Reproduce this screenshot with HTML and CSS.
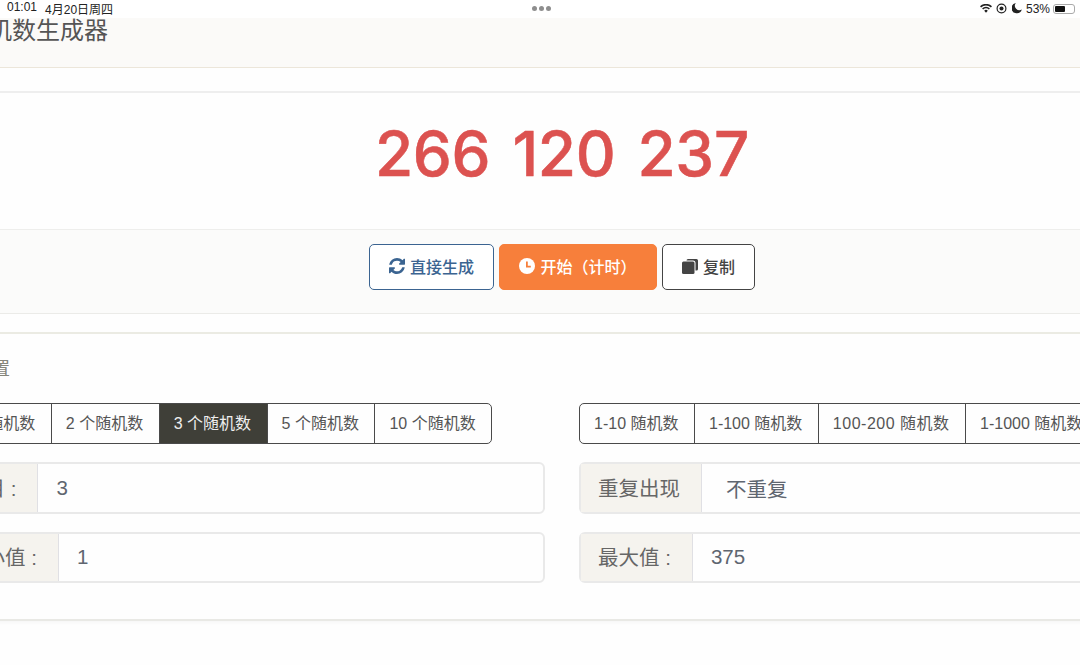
FILE: index.html
```html
<!DOCTYPE html>
<html>
<head>
    <title>随机数生成器</title>
    <link rel="stylesheet" href="styles.css">
</head>
<body>
    <div class="statusbar">
        <div class="status-left"><span>01:01</span><span>4月20日周四</span></div>
        <div class="status-dots"><i></i><i></i><i></i></div>
        <div class="status-right">
            <svg class="st-wifi" viewBox="0 0 14 10"><path d="M7 10 4.900 7.600a3 3 0 0 1 4.200 0zM3.700 6.300 2.400 4.900a6.600 6.600 0 0 1 9.200 0l-1.300 1.400a4.700 4.700 0 0 0-6.600 0zM1.300 3.700 0 2.400a10 10 0 0 1 14 0l-1.300 1.300a8.200 8.200 0 0 0-11.400 0z"/></svg>
            <svg class="st-lock" viewBox="0 0 12 12"><circle cx="6" cy="6" r="4.800" fill="none" stroke="#222" stroke-width="1.300"/><circle cx="6" cy="6" r="2.200"/></svg>
            <svg class="st-moon" viewBox="0 0 10 11"><path d="M3.800 0a4.500 4.500 0 0 0 6 6.500A5.200 5.200 0 1 1 3.800 0z"/></svg>
            <span>53%</span>
            <div class="battery"><div class="battery-level"></div></div>
        </div>
    </div>

    <div class="page">
        <div class="page-header">随机数生成器</div>

        <div class="card result-card">
            <div class="result">
                <span>266</span><span>120</span><span>237</span>
            </div>
            <div class="actions">
                <button class="btn btn-blue">
                    <svg class="icon" viewBox="0 0 1536 1536"><path d="M1511 928q0 5-1 7-64 268-268 434.500t-478 166.500q-146 0-282.500-55t-243.500-157l-129 129q-19 19-45 19t-45-19-19-45v-448q0-26 19-45t45-19h448q26 0 45 19t19 45-19 45l-137 137q71 66 161 102t187 36q134 0 250-65t186-179q11-17 53-117 8-23 30-23h192q13 0 22.500 9.500t9.500 22.500zm25-800v448q0 26-19 45t-45 19h-448q-26 0-45-19t-19-45 19-45l138-138q-148-137-349-137-134 0-250 65t-186 179q-11 17-53 117-8 23-30 23h-199q-13 0-22.500-9.500t-9.500-22.500v-7q65-268 270-434.500t480-166.500q146 0 284 55.500t245 156.500l130-129q19-19 45-19t45 19 19 45z"/></svg>
                    直接生成
                </button>
                <button class="btn btn-orange">
                    <svg class="icon" viewBox="0 0 16 16"><circle cx="8" cy="8" r="8"/><path d="M7 3.500h1.800v4.200h3v1.800H7z" fill="#f77f3b"/></svg>
                    开始（计时）
                </button>
                <button class="btn btn-dark">
                    <svg class="icon" viewBox="0 0 16 16"><path d="M6 1H14.500A1.500 1.500 0 0 1 16 2.500V11A1.500 1.500 0 0 1 14.500 12.500H13.500V5A2.500 2.500 0 0 0 11 2.500H4.500A1.500 1.500 0 0 1 6 1z"/><rect y="3.500" width="12.500" height="12.500" rx="1.500"/></svg>
                    复制
                </button>
            </div>
        </div>

        <div class="card settings-card">
            <div class="settings-title">配置</div>
            <div class="settings-grid">
                <div class="settings-col">
                    <div class="btn-group btn-group-left">
                        <div class="seg">1 个随机数</div>
                        <div class="seg">2 个随机数</div>
                        <div class="seg active">3 个随机数</div>
                        <div class="seg">5 个随机数</div>
                        <div class="seg">10 个随机数</div>
                    </div>
                    <div class="field">
                        <div class="field-label">数目 :</div>
                        <div class="field-value">3</div>
                    </div>
                    <div class="field">
                        <div class="field-label">最小值 :</div>
                        <div class="field-value">1</div>
                    </div>
                </div>
                <div class="settings-col">
                    <div class="btn-group">
                        <div class="seg">1-10 随机数</div>
                        <div class="seg">1-100 随机数</div>
                        <div class="seg seg-wide">100-200 随机数</div>
                        <div class="seg">1-1000 随机数</div>
                    </div>
                    <div class="field">
                        <div class="field-label">重复出现</div>
                        <div class="field-value field-select">不重复</div>
                    </div>
                    <div class="field">
                        <div class="field-label">最大值 :</div>
                        <div class="field-value">375</div>
                    </div>
                </div>
            </div>
        </div>
    </div>
</body>
</html>
```

FILE: styles.css
```css
* {
    margin: 0;
    padding: 0;
    box-sizing: border-box;
}

html, body {
    height: 665px;
    overflow: hidden;
}

body {
    background: #fefefe;
    font-family: "Liberation Sans", "Noto Sans CJK SC", sans-serif;
    color: #444;
}

.statusbar {
    height: 18px;
    padding: 0 5px 3px 7px;
    display: grid;
    grid-template-columns: 1fr auto 1fr;
    align-items: center;
    font-size: 12px;
    color: #222;
    background: #fff;
}

.status-left {
    display: flex;
    gap: 8px;
}

.status-dots {
    display: flex;
    gap: 2px;
}

.status-dots i {
    width: 5px;
    height: 5px;
    border-radius: 50%;
    background: #8e8e8e;
}

.status-right {
    display: flex;
    justify-content: flex-end;
    align-items: center;
}

.status-right svg {
    fill: #222;
}

.st-wifi {
    width: 12px;
    height: 9px;
    margin-right: 4px;
}

.st-lock {
    width: 11px;
    height: 11px;
    margin-right: 5px;
}

.st-moon {
    width: 10px;
    height: 11px;
    margin-right: 4px;
}

.battery {
    width: 22px;
    height: 10px;
    margin-left: 3px;
    padding: 1px;
    border: 1px solid #aaa;
    border-radius: 3px;
}

.battery-level {
    width: 55%;
    height: 100%;
    background: #111;
    border-radius: 1px;
}

.page {
    width: 1318px;
    margin-left: -97px;
}

.page-header {
    height: 50px;
    padding: 0 0 0 61px;
    background: #fbfaf8;
    border-bottom: 1px solid #ece6da;
    font-size: 24px;
    line-height: 26px;
    color: #555;
}

.card {
    background: #fefefe;
}

.result-card {
    margin-top: 23px;
    border-top: 2px solid #eeeeee;
}

.result {
    height: 136px;
    padding-top: 22px;
    display: flex;
    justify-content: center;
    gap: 22px;
    font-family: "Inter", "Liberation Sans", sans-serif;
    font-size: 62px;
    line-height: 78px;
    font-weight: 500;
    letter-spacing: -0.3px;
    -webkit-text-stroke: 0.5px #dc5250;
    color: #dc5250;
}

.actions {
    height: 85px;
    display: flex;
    justify-content: center;
    gap: 5px;
    padding-top: 14px;
    background: #fbfbfa;
    border-top: 1px solid #eeeeec;
    border-bottom: 1px solid #ebebe8;
}

.btn {
    height: 46px;
    padding-bottom: 2px;
    display: flex;
    align-items: center;
    justify-content: center;
    gap: 5px;
    border-radius: 5px;
    font-family: inherit;
    font-size: 16px;
    font-weight: 500;
    background: #fff;
    border: 1px solid;
}

.icon {
    width: 16px;
    height: 16px;
    fill: currentColor;
}

.btn-blue {
    width: 125px;
    color: #3b6491;
    border-color: #3b6491;
}

.btn-orange {
    width: 158px;
    color: #fff;
    background: #f77f3b;
    border-color: #f77f3b;
}

.btn-dark {
    width: 93px;
    color: #444;
    border-color: #444;
}

.settings-card {
    height: 289px;
    margin-top: 18px;
    padding: 27px 42px 0;
    border-top: 2px solid #ebebe3;
    border-bottom: 2px solid #e9e9e5;
    box-shadow: 0 2px 4px rgba(0,0,0,0.03);
}

.settings-title {
    margin-left: 29px;
    font-size: 18px;
    line-height: 16px;
    color: #85857a;
}

.settings-grid {
    margin-top: 26px;
    display: grid;
    grid-template-columns: 1fr 1fr;
    gap: 34px;
}

.settings-col {
    display: flex;
    flex-direction: column;
    gap: 18px;
}

.btn-group {
    display: flex;
    align-self: flex-start;
    height: 41px;
    border: 1px solid #4a4a4a;
    border-radius: 5px;
    overflow: hidden;
    white-space: nowrap;
}

.btn-group-left {
    margin-left: -2px;
}

.seg {
    padding: 0 15.500px 3px 14px;
    display: flex;
    align-items: center;
    font-size: 16px;
    color: #555;
    border-left: 1px solid #4a4a4a;
}

.seg:first-child {
    border-left: 0;
}

.seg-wide {
    letter-spacing: 0.5px;
}

.seg.active {
    color: #eee;
    background: #3f3f38;
}

.field {
    height: 52px;
    display: flex;
    border: 2px solid #e9e9e9;
    border-radius: 6px;
    font-size: 20.500px;
    color: #5f6670;
}

.field + .field {
    height: 51px;
}

.field-label {
    padding: 0 21px 3px 17px;
    display: flex;
    align-items: center;
    white-space: pre;
    background: #f5f3ee;
    border-right: 1px solid #e0e0e4;
    color: #666;
}

.field-value {
    padding: 0 18px 1px;
    display: flex;
    align-items: center;
}

.field-select {
    padding-left: 24px;
}
```
